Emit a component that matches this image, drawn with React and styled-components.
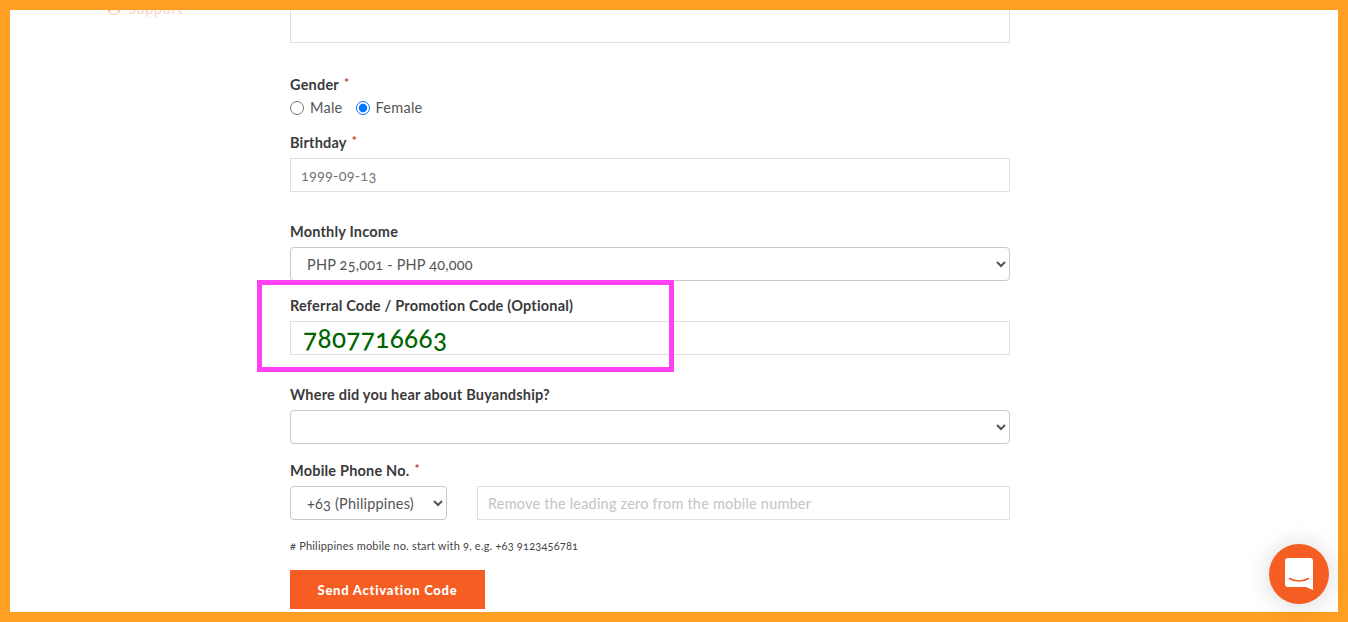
import React from "react";
import styled, { createGlobalStyle } from "styled-components";

const Global = createGlobalStyle`
  html, body { margin: 0; padding: 0; height: 622px; overflow: hidden; background: #fff; }
  body { font-family: "Lato", "Open Sans", sans-serif; font-variant-numeric: oldstyle-nums; color: #333; }
  * { box-sizing: border-box; }
`;

const Frame = styled.div`
  position: fixed;
  inset: 0;
  border: 10px solid #ff9f24;
  pointer-events: none;
  z-index: 5;
`;

const Page = styled.div`
  display: flex;
  align-items: flex-start;
  height: 622px;
  overflow: hidden;
`;

const Sidebar = styled.nav`
  width: 290px;
  flex: none;
  padding-left: 107px;
`;

const SideLink = styled.a`
  display: flex;
  align-items: center;
  gap: 7px;
  height: 16px;
  font-size: 15px;
  letter-spacing: 0.35px;
  color: #fcd5c4;
`;

const Form = styled.form`
  width: 720px;
  flex: none;
  padding-top: 9px;
  display: flex;
  flex-direction: column;
`;

const Field = styled.div`
  position: relative;
  display: flex;
  flex-direction: column;
  gap: 5px;
  margin-top: ${(p) => p.$top || 0}px;
`;

const Label = styled.label`
  font-size: 14.5px;
  line-height: 20px;
  font-weight: 700;
  letter-spacing: 0.2px;
  color: #3a3a3a;
`;

const Req = styled.span`
  color: #c0392b;
  font-size: 12px;
  vertical-align: 3px;
  margin-left: 5px;
`;

const TextInput = styled.input`
  display: block;
  width: ${(p) => p.$width || "100%"};
  height: 34px;
  border: 1px solid #e0e0e0;
  border-radius: 0;
  padding: 0 10px;
  font-family: inherit;
  font-variant-numeric: oldstyle-nums;
  font-size: 14.5px;
  letter-spacing: 0.2px;
  color: #777;
  background: #fff;
  outline: none;
  &::placeholder { color: #c4c4c4; opacity: 1; }
`;

const CodeInput = styled(TextInput)`
  font-size: 26px;
  font-weight: 500;
  color: #006400;
  padding: 0 12px;
  letter-spacing: 0.4px;
`;

const Select = styled.select`
  display: block;
  width: ${(p) => p.$width || "100%"};
  flex: none;
  height: 34px;
  border: 1px solid #c8c8c8;
  border-radius: 4px;
  padding: 0 12px;
  background: #fff;
  font-family: inherit;
  font-variant-numeric: oldstyle-nums;
  font-size: 14.5px;
  letter-spacing: 0.2px;
  color: #555;
`;

const RadioRow = styled.div`
  display: flex;
  align-items: center;
  gap: 13px;
  height: 20px;
  margin-top: 2px;
`;

const RadioLabel = styled.label`
  display: flex;
  align-items: center;
  gap: 6px;
  font-size: 14.5px;
  letter-spacing: 0.25px;
  color: #555;
`;

const Radio = styled.input`
  width: 14px;
  height: 14px;
  margin: 2px 0 0;
`;

const PhoneRow = styled.div`
  display: flex;
  gap: 30px;
`;

const Hint = styled.p`
  margin: 19px 0 0;
  font-size: 11px;
  line-height: 14px;
  letter-spacing: 0.2px;
  color: #444;
`;

const SendButton = styled.button`
  align-self: flex-start;
  width: 195px;
  height: 39px;
  margin-top: 17px;
  border: 0;
  border-radius: 0;
  background: #f55d22;
  color: #fff;
  font-family: inherit;
  font-size: 13px;
  font-weight: 900;
  letter-spacing: 0.75px;
`;

const Highlight = styled.div`
  position: absolute;
  left: -33px;
  top: -16px;
  width: 417px;
  height: 92px;
  border: 5px solid #ff40f5;
  pointer-events: none;
`;

const ChatButton = styled.button`
  position: fixed;
  left: 1269px;
  top: 544px;
  width: 60px;
  height: 60px;
  padding: 0;
  border: 0;
  border-radius: 50%;
  background: #f55d22;
  box-shadow: 0 1px 24px rgba(0, 0, 0, 0.16);
  display: flex;
  align-items: center;
  justify-content: center;
  z-index: 6;
`;

const UserIcon = () => (
  <svg width="14" height="14" viewBox="0 0 14 14" aria-hidden="true">
    <circle cx="7" cy="7" r="7" fill="#fbc9b3" />
    <circle cx="7" cy="5.2" r="2.5" fill="#fff" />
    <path d="M2.8 11.2c.7-2 2.3-3 4.2-3s3.500 1 4.200 3a6 6 0 0 1-8.400 0z" fill="#fff" />
  </svg>
);

const ChatIcon = () => (
  <svg width="28" height="32" viewBox="0 0 28 32" aria-hidden="true">
    <path d="M3 0h22a3 3 0 0 1 3 3v29l-7-3H3a3 3 0 0 1-3-3V3a3 3 0 0 1 3-3z" fill="#fff" />
    <path d="M4.500 20.500c5.500 3.400 13.500 3.400 19 0" fill="none" stroke="#f55d22" strokeWidth="1.600" strokeLinecap="round" />
  </svg>
);

export default function App() {
  return (
    <>
      <Global />
      <Page>
        <Sidebar>
          <SideLink>
            <UserIcon />
            Support
          </SideLink>
        </Sidebar>
        <Form onSubmit={(e) => e.preventDefault()}>
          <TextInput readOnly aria-label="Name" />
          <Field $top={30}>
            <Label>
              Gender<Req>*</Req>
            </Label>
          </Field>
          <RadioRow>
            <RadioLabel>
              <Radio type="radio" name="gender" />
              Male
            </RadioLabel>
            <RadioLabel>
              <Radio type="radio" name="gender" defaultChecked />
              Female
            </RadioLabel>
          </RadioRow>
          <Field $top={14}>
            <Label>
              Birthday<Req>*</Req>
            </Label>
            <TextInput readOnly defaultValue="1999-09-13" />
          </Field>
          <Field $top={30}>
            <Label>Monthly Income</Label>
            <Select defaultValue="b">
              <option value="b">PHP 25,001 - PHP 40,000</option>
            </Select>
          </Field>
          <Field $top={15}>
            <Highlight />
            <Label>Referral Code / Promotion Code (Optional)</Label>
            <CodeInput readOnly defaultValue="7807716663" />
          </Field>
          <Field $top={30}>
            <Label>Where did you hear about Buyandship?</Label>
            <Select defaultValue="">
              <option value=""></option>
            </Select>
          </Field>
          <Field $top={15}>
            <Label>
              Mobile Phone No.<Req>*</Req>
            </Label>
            <PhoneRow>
              <Select $width="157px" defaultValue="63">
                <option value="63">+63 (Philippines)</option>
              </Select>
              <TextInput placeholder="Remove the leading zero from the mobile number" />
            </PhoneRow>
          </Field>
          <Hint># Philippines mobile no. start with 9, e.g. +63 9123456781</Hint>
          <SendButton type="submit">Send Activation Code</SendButton>
        </Form>
      </Page>
      <Frame />
      <ChatButton aria-label="Chat">
        <ChatIcon />
      </ChatButton>
    </>
  );
}
